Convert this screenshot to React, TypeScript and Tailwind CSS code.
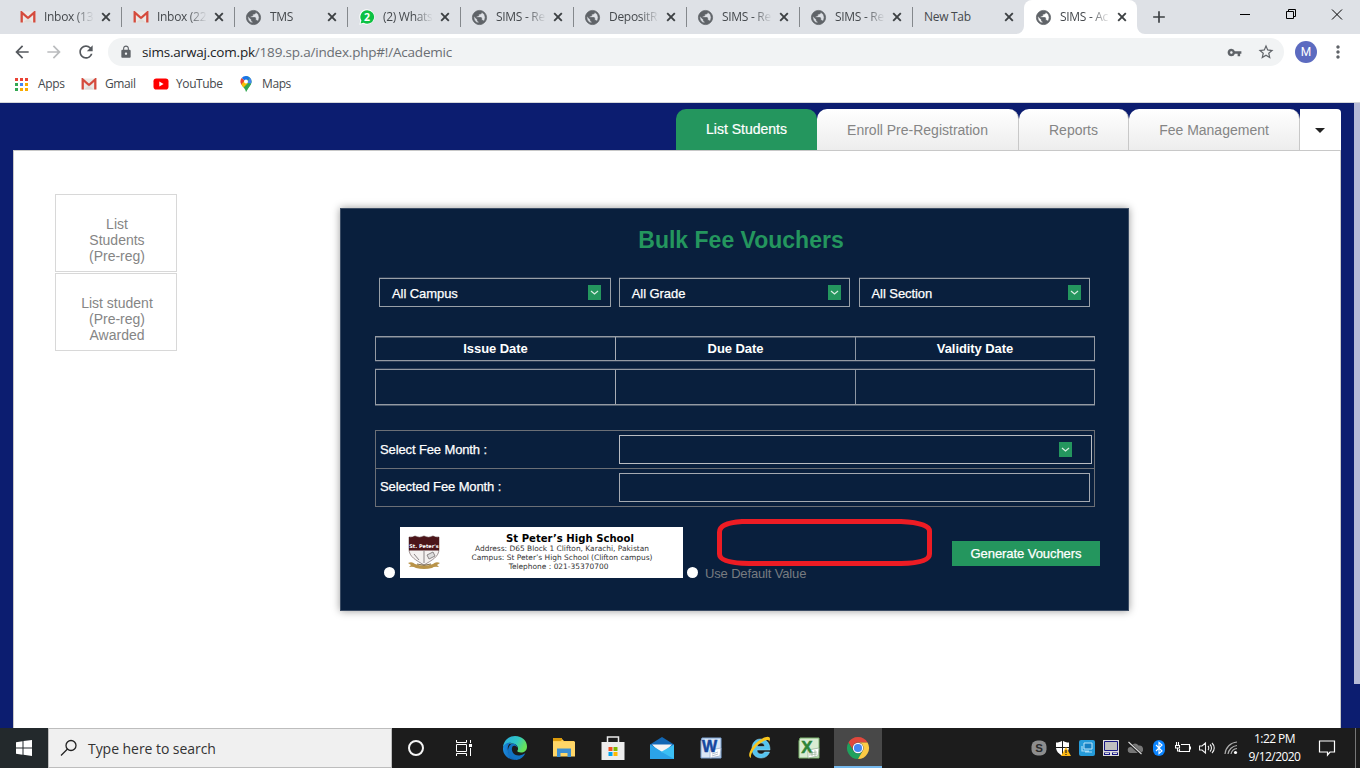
import React from "react";
import {
  MdArrowBack,
  MdArrowForward,
  MdRefresh,
  MdLock,
  MdVpnKey,
  MdStarBorder,
  MdMoreVert,
  MdAdd,
} from "react-icons/md";

const ui = "font-['Open_Sans','Noto_Sans',sans-serif]";

function Gmail({ className = "" }: { className?: string }) {
  return (
    <svg viewBox="0 0 16 12" className={`h-[12px] w-[16px] ${className}`}>
      <rect x="1" y="0.5" width="14" height="11" fill="#ebe9e7" />
      <path d="M1.700 11.500V1.500L8 7L14.300 1.500V11.500" fill="none" stroke="#d54b3d" strokeWidth="2.300" />
      <path d="M3 11.500L8 7.500L13 11.500z" fill="#dedcd9" />
    </svg>
  );
}

function Globe() {
  return (
    <svg viewBox="0 0 24 24" className="-ml-px size-[17px] shrink-0 text-[#5f6368]">
      <path
        d="M12 2C6.480 2 2 6.480 2 12s4.480 10 10 10 10-4.480 10-10S17.520 2 12 2zm-1 17.930c-3.950-.490-7-3.850-7-7.930 0-.620.080-1.210.210-1.790L9 15v1c0 1.100.900 2 2 2v1.930zm6.900-2.540c-.260-.810-1-1.390-1.900-1.390h-1v-3c0-.550-.450-1-1-1H8v-2h2c.550 0 1-.450 1-1V7h2c1.100 0 2-.900 2-2v-.410c2.930 1.190 5 4.060 5 7.410 0 2.080-.800 3.970-2.100 5.390z"
        fill="currentColor"
        stroke="currentColor"
        strokeWidth="1"
      />
    </svg>
  );
}

function Whats() {
  return (
    <svg viewBox="0 0 16 16" className="size-[16px]">
      <path d="M8 .2a7.700 7.700 0 1 1-3.500 14.600L.3 15.800l1-4A7.800 7.800 0 0 1 8 .2z" fill="#fff" />
      <path d="M8 1.200a6.800 6.800 0 1 1-3.400 12.500l-3 .8.800-2.900A6.800 6.800 0 0 1 8 1.200z" fill="#0dc143" />
      <text x="8" y="12" textAnchor="middle" fontSize="10.500" fontWeight="700" fontFamily="Open Sans, sans-serif" fill="#fff">2</text>
    </svg>
  );
}

type Tab = { icon: "gmail" | "globe" | "whats" | "none"; title: string; active?: boolean };
const tabs: Tab[] = [
  { icon: "gmail", title: "Inbox (13" },
  { icon: "gmail", title: "Inbox (22" },
  { icon: "globe", title: "TMS" },
  { icon: "whats", title: "(2) Whats" },
  { icon: "globe", title: "SIMS - Re" },
  { icon: "globe", title: "DepositR" },
  { icon: "globe", title: "SIMS - Re" },
  { icon: "globe", title: "SIMS - Re" },
  { icon: "none", title: "New Tab" },
  { icon: "globe", title: "SIMS - Ac", active: true },
];

function TabStrip() {
  return (
    <div className="flex h-[34px] bg-[#dee1e6] pl-2">
      {tabs.map((t, i) => (
        <div
          key={i}
          className={`relative flex h-[34px] w-[113px] shrink-0 items-center pl-3 ${t.active ? "-ml-px rounded-t-lg bg-white" : ""}`}
        >
          {t.icon !== "none" && (
            <span className="mr-2 flex w-4 shrink-0">
              {t.icon === "gmail" && <Gmail />}
              {t.icon === "globe" && <Globe />}
              {t.icon === "whats" && <Whats />}
            </span>
          )}
          <span
            className={`${t.icon === "none" ? "w-[73px]" : "w-[50px]"} shrink-0 overflow-hidden text-[12px] leading-4 tracking-[-0.3px] whitespace-nowrap text-[#45494d] ${t.icon === "none" ? "" : "[mask-image:linear-gradient(to_right,#000_62%,transparent)]"}`}
          >
            {t.title}
          </span>
          <svg viewBox="0 0 14 14" className="ml-[5px] size-[14px] shrink-0">
            <path d="M3.200 3.200l7.600 7.600M10.800 3.200l-7.600 7.600" stroke="#3c4043" strokeWidth="1.900" />
          </svg>
          {i < 8 && <span className="-mr-px ml-auto h-5 w-px bg-[#84888c]" />}
          {t.active && (
            <>
              <svg viewBox="0 0 8 8" className="absolute bottom-0 -left-2 size-2"><path d="M8 0v8H0a8 8 0 0 0 8-8" fill="#fff" /></svg>
              <svg viewBox="0 0 8 8" className="absolute -right-2 bottom-0 size-2"><path d="M0 0v8h8a8 8 0 0 1-8-8" fill="#fff" /></svg>
            </>
          )}
        </div>
      ))}
      <MdAdd className="mt-[7px] ml-[12px] size-[20px] shrink-0 text-[#3c4043]" />
      <svg viewBox="0 0 110 16" className="mt-[6px] ml-[67px] h-[16px] w-[110px] shrink-0" fill="none" stroke="#000">
        <path d="M4 8.500h10M50.500 5.500h7v7h-7zM52.500 5.500v-2h7v7h-2M96 3.500l10 10M106 3.500l-10 10" />
      </svg>
    </div>
  );
}

function AddressBar() {
  return (
    <div className="flex h-[37px] items-center pb-px pl-[12px]">
      <MdArrowBack className="size-[20px] text-[#55595e]" />
      <MdArrowForward className="ml-[12px] size-[20px] text-[#babcbe]" />
      <MdRefresh className="ml-[12px] size-[20px] text-[#55595e]" />
      <div className="ml-[12px] flex h-[28px] w-[1176px] items-center rounded-full bg-[#f1f3f4] pl-[11px]">
        <MdLock className="size-[14px] text-[#5f6368]" />
        <span className="ml-[9px] text-[13.5px] tracking-[-0.2px] whitespace-nowrap text-[#6a6e73]">
          <span className="text-[#202124]">sims.arwaj.com.pk</span>/189.sp.a/index.php#!/Academic
        </span>
        <MdVpnKey className="ml-auto size-[15px] text-[#5f6368]" />
        <MdStarBorder className="mr-[9px] ml-[15px] size-[18px] text-[#5f6368]" />
      </div>
      <div className="ml-[11px] flex size-[22px] items-center justify-center rounded-full bg-[#5c6bc0] font-[Roboto] text-[12px] text-white">M</div>
      <MdMoreVert className="ml-[11px] size-[20px] text-[#5f6368]" />
    </div>
  );
}

const appDots = ["#ea4335", "#ea4335", "#ea4335", "#34a853", "#4285f4", "#f9ab00", "#34a853", "#f9ab00", "#f9ab00"];

function Bookmarks() {
  return (
    <div className="flex h-[32px] items-center border-b border-[#d5d7da] pb-[5px] pl-[15px] text-[12px] text-[#45494d]">
      <svg viewBox="0 0 13 13" className="size-[13px]">
        {appDots.map((c, i) => (
          <rect key={i} x={(i % 3) * 5} y={Math.floor(i / 3) * 5} width="3" height="3" fill={c} />
        ))}
      </svg>
      <span className="ml-[10px] w-[43px] tracking-[-0.3px]">Apps</span>
      <Gmail />
      <span className="ml-[8px] w-[48px] tracking-[-0.4px]">Gmail</span>
      <svg viewBox="0 0 16 12" className="h-[12px] w-[16px]">
        <rect x="0.500" y="0.500" width="15" height="11" rx="2.800" fill="#f00" />
        <path d="M6.300 3.500v5l4.300-2.500z" fill="#fff" />
      </svg>
      <span className="ml-[7px] w-[64px] tracking-[-0.4px]">YouTube</span>
      <svg viewBox="0 0 12 16" className="h-[16px] w-[12px]">
        <path d="M6 0a5.600 5.600 0 0 1 5.600 5.600C11.600 10 7.200 11.500 6 16z" fill="#34a853" />
        <path d="M6 16C5.500 12.500 2.800 11 1.300 8.500L9.500 2 11 8z" fill="#34a853" />
        <path d="M1.300 8.500C-.2 6 .3 3.500 1.700 2L6 5.600z" fill="#ea4335" />
        <path d="M1.300 8.500 6 3l2 4-4.500 4.600z" fill="#fbbc04" />
        <path d="M1.700 2A5.600 5.600 0 0 1 9.800 1.600L6 5.600z" fill="#1a73e8" />
        <path d="M9.800 1.600a5.600 5.600 0 0 1 1.300 6L7 7z" fill="#4285f4" />
        <circle cx="6" cy="5.600" r="2" fill="#fff" />
      </svg>
      <span className="ml-[10px] tracking-[-0.4px]">Maps</span>
    </div>
  );
}

const navItem = "flex h-[41px] items-center justify-center rounded-t-[10px] border-r border-[#c8c8c8] bg-linear-to-b from-white to-[#ededed] pt-[2px] text-[14px] text-[#858585]";

function Caret() {
  return (
    <span className="flex h-[15px] w-[13px] items-center justify-center bg-[#24965e]">
      <svg viewBox="0 0 9 6" className="h-[6px] w-[9px]"><path d="M1 1l3.500 3L8 1" fill="none" stroke="#d9eee2" strokeWidth="1.200" /></svg>
    </span>
  );
}

function Select({ label }: { label: string }) {
  return (
    <div className="flex h-[29px] w-[231.5px] items-center border border-[#99a0a8] pr-[8.5px] pl-[12px] text-[13px] tracking-[-0.07px] text-white shadow-[0_-1px_#2c3c55] [-webkit-text-stroke:0.25px_#fff]">
      <span className="mt-[2px] mr-auto">{label}</span>
      <Caret />
    </div>
  );
}

function SchoolCard() {
  return (
    <div className="flex h-[51px] w-[283px] items-start bg-white">
      <svg viewBox="0 0 34 34" className="mt-[8px] ml-[7px] size-[34px] shrink-0">
        <path d="M2 2q4 .5 6-1 4.500 2.500 9 0 4.500 2.500 9 0 2 1.500 6 1v12c0 8-7 11-15 16C9 25 2 22 2 14z" fill="#f4f1f0" stroke="#8a7b7b" strokeWidth=".8" />
        <path d="M2 2q4 .5 6-1 4.500 2.500 9 0 4.500 2.500 9 0 2 1.500 6 1v13.500H2z" fill="#4b1519" />
        <path d="M17 15.500V28M20 20l6-3 2 4-6 3zM7 19l5 6" stroke="#8a8587" strokeWidth="1" fill="#ddd" />
        <path d="M1 28q4-2 7 1 9 3 18 0 3-3 7-1l-3 2 2 2q-5-1-7 1-8 2-16 0-3-2-7-1l2-2z" fill="#b99348" />
        <path d="M10 29q7 2.500 14 0" fill="none" stroke="#5f4720" strokeWidth=".8" />
        <text x="17" y="12.500" textAnchor="middle" fontSize="5" fontWeight="700" fontFamily="DejaVu Sans, sans-serif" fill="#fff">St. Peter's</text>
      </svg>
      <div className="flex flex-1 flex-col items-center pt-[6px] font-['DejaVu_Sans',sans-serif] text-[7.45px] leading-[9px] whitespace-nowrap text-[#333]">
        <div className="pl-[16px] text-[10.1px] leading-[11px] font-bold text-black">St Peter’s High School</div>
        <div>Address: D65 Block 1 Clifton, Karachi, Pakistan</div>
        <div>Campus: St Peter’s High School (Clifton campus)</div>
        <div className="pr-[7px]">Telephone : 021-35370700</div>
      </div>
    </div>
  );
}

function Voucher() {
  return (
    <section className="relative mt-[57px] ml-[163px] h-[403px] w-[789px] border border-[#3b4c64] bg-[#091f3d] pl-[34px] shadow-[0_0_8px_rgba(0,0,0,0.4)]">
      <h1 className="mr-[21px] pt-[17px] text-center text-[23px] leading-[28px] font-bold text-[#24965e]">Bulk Fee Vouchers</h1>
      <div className="mt-[24px] flex gap-[8.25px] pl-[4px]">
        <Select label="All Campus" />
        <Select label="All Grade" />
        <Select label="All Section" />
      </div>
      <div className="mt-[29px] grid h-[25px] w-[720px] grid-cols-[240px_240px_1fr] border border-[#949aa3] text-center text-[13px] leading-[23px] font-bold tracking-[-0.07px] text-white shadow-[inset_0_1px_#4a596d,0_1px_#2c3c55]">
        <div className="border-r border-[#a8adb5]">Issue Date</div>
        <div className="border-r border-[#8d96a3]">Due Date</div>
        <div>Validity Date</div>
      </div>
      <div className="mt-[8px] grid h-[36px] w-[720px] grid-cols-[240px_240px_1fr] border border-[#949aa3] shadow-[0_-1px_#2c3c55,0_1px_#4a596d]">
        <div className="border-r border-[#a8adb5]" />
        <div className="border-r border-[#8d96a3]" />
        <div />
      </div>
      <div className="mt-[25px] w-[720px] border border-[#6b6f76] text-[13px] tracking-[-0.12px] text-white [-webkit-text-stroke:0.25px_#fff]">
        <div className="flex h-[38px] items-center border-b border-[#6b6f76]">
          <span className="w-[243px] pl-[4px]">Select Fee Month :</span>
          <div className="flex h-[29px] w-[473px] items-center justify-end border border-[#b9bcc2] pr-[19px]"><Caret /></div>
        </div>
        <div className="flex h-[37px] items-center">
          <span className="w-[243px] pb-[2px] pl-[4px]">Selected Fee Month :</span>
          <div className="h-[29px] w-[471px] border border-[#a4a9b1]" />
        </div>
      </div>
      <div className="mt-[20px] flex text-[13px] text-[#777b80]">
        <span className="mt-[40px] ml-[9px] size-[11px] shrink-0 rounded-full bg-white" />
        <div className="ml-[5px] shrink-0"><SchoolCard /></div>
        <span className="mt-[40px] ml-[4px] size-[11px] shrink-0 rounded-full bg-white" />
        <span className="mt-[38px] ml-[7px] w-[102px] shrink-0 leading-[18px] tracking-[-0.15px] whitespace-nowrap">Use Default Value</span>
        <button className="mt-[14px] ml-[145px] h-[25px] w-[148px] shrink-0 bg-[#24965e] text-[13px] tracking-[-0.07px] text-white [-webkit-text-stroke:0.25px_#fff]">Generate Vouchers</button>
      </div>
      <svg viewBox="0 0 215 48" className="absolute top-[310px] left-[376px] h-[48px] w-[215px]">
        <path d="M25 2.500H184Q212.500 4 212.500 12V35Q212.500 44 184 44.500H32Q2.500 44 2.500 35V13Q2.500 4 25 2.500z" fill="none" stroke="#ed1c24" strokeWidth="5" />
      </svg>
    </section>
  );
}

function SideBox({ lines }: { lines: string[] }) {
  return (
    <div className="flex h-[78px] w-[122px] flex-col items-center border border-[#d8d8d8] pt-[21px] pl-[2px] text-[14px] leading-4 text-[#858585]">
      {lines.map((l) => <span key={l}>{l}</span>)}
    </div>
  );
}

function Page() {
  return (
    <div className="flex h-[625px] bg-[#0c1d70] font-['Liberation_Sans',Arial,sans-serif]">
      <div className="ml-[13px] w-[1328px]">
        <nav className="mt-[6px] flex h-[41px] justify-end">
          <div className="flex h-[41px] w-[141px] items-center justify-center rounded-t-[10px] bg-[#24965e] text-[14px] text-white [-webkit-text-stroke:0.2px_#fff]">List Students</div>
          <div className={`${navItem} w-[202px]`}>Enroll Pre-Registration</div>
          <div className={`${navItem} w-[110px]`}>Reports</div>
          <div className={`${navItem} w-[171px]`}>Fee Management</div>
          <div className="flex h-[41px] w-[41px] items-center justify-center rounded-tr-sm bg-white pt-[2px] pr-[2px]">
            <svg viewBox="0 0 10 5" className="h-[5px] w-[10px]"><path d="M0 0h10L5 5z" fill="#222" /></svg>
          </div>
        </nav>
        <main className="flex h-[578px] items-start border-x border-t border-[#c8c8c8] bg-white pl-[41px]">
          <aside className="mt-[43px] flex flex-col gap-px">
            <SideBox lines={["List", "Students", "(Pre-reg)"]} />
            <SideBox lines={["List student", "(Pre-reg)", "Awarded"]} />
          </aside>
          <Voucher />
        </main>
      </div>
      <div className="ml-auto h-[581px] w-[6px] bg-[#b5bad7]" />
    </div>
  );
}

const apps: React.ReactNode[] = [
  <svg viewBox="0 0 24 24" className="size-6">
    <defs>
      <linearGradient id="edgeTop" x1="0" x2="1" y1="0" y2=".4"><stop offset="0" stopColor="#2aa9e0" /><stop offset=".6" stopColor="#30c7c5" /><stop offset="1" stopColor="#66e35a" /></linearGradient>
      <linearGradient id="edgeLow" x1="0" x2="1"><stop stopColor="#1b8de0" /><stop offset="1" stopColor="#0d4f9e" /></linearGradient>
    </defs>
    <path d="M0 11.500C.5 4.500 6 0 12 0c7.500 0 12 5.200 12 10.500 0 4-2.700 6-6 6-3 0-4.200-1-3.500-2C16 12.500 14.500 7.500 9 7.500c-5 0-8 2-9 4z" fill="url(#edgeTop)" />
    <path d="M0 12C.5 8.500 4 6 8.500 6.500c-4 2-4.500 6-3 10 1.500 4 5 6.500 8.500 7.300C5.500 25-.5 18.500 0 12z" fill="url(#edgeLow)" />
    <path d="M9.500 10.500c-2 4 1 9.500 7 9 2.500-.2 4.500-1.500 5.800-2.200-1.500 3.500-4.800 6.200-8.500 6.600C8 23 5 19.500 5 15c0-4 2-7 5-7.500 2 0 4 2 4.500 4-1.500-2-4-2.500-5-1z" fill="#1273c4" />
  </svg>,
  <svg viewBox="0 0 22 20" className="h-5 w-[22px]">
    <path d="M0 1h9l2 2h10.500v15H0z" fill="#ffd058" /><path d="M0 0h9v2L7.500 3H0z" fill="#dc9b0c" /><path d="M0 4h22v14.500H0z" fill="#ffd667" /><path d="M4 19V10.500h14V19h-3.500v-4h-7v4z" fill="#3d8fd1" />
  </svg>,
  <svg viewBox="0 0 24 26" className="h-[26px] w-6">
    <path d="M6.500 8V2h11v6" fill="none" stroke="#e9e9e9" strokeWidth="1.500" /><path d="M.5 7h23v18H.5z" fill="#ededed" />
    <path d="M7.500 12h4v4h-4z" fill="#f25022" /><path d="M12.500 12h4v4h-4z" fill="#7fba00" /><path d="M7.500 17h4v4h-4z" fill="#00a4ef" /><path d="M12.500 17h4v4h-4z" fill="#ffb900" />
  </svg>,
  <svg viewBox="0 0 24 24" className="size-6">
    <path d="M0 8.500L12 1l12 7.500V12H0z" fill="#1267b4" /><path d="M2 8.500h20L13.500 17h-3z" fill="#f5f5f5" /><path d="M0 8.500V23h24z" fill="#2ca8e8" /><path d="M24 8.500V23H0l11-7z" fill="#3cc0f4" /><path d="M0 8.500L11 16l2.500 1L24 23H0z" fill="#2ba3e8" />
  </svg>,
  <svg viewBox="0 0 22 22" className="size-[22px]">
    <path d="M2 1h19v20H1V4z" fill="#d9e6f6" stroke="#7da3d4" /><path d="M10 13l11-2-1 8-10 2z" fill="#fff" stroke="#93a9c6" strokeWidth=".7" />
    <text x="9.500" y="15" textAnchor="middle" fontFamily="Liberation Sans" fontWeight="700" fontSize="16" fill="#15479e" stroke="#15479e" strokeWidth=".5">W</text><path d="M12 17l6-2M12 19l6-2" stroke="#9aaabd" strokeWidth=".7" />
  </svg>,
  <svg viewBox="0 0 24 24" className="size-6">
    <path d="M12.500 3C7 3 4 7.500 4 12.500 4 18 7.500 22 13 22c4.500 0 7.500-2.500 8.500-6h-5c-.7 1.500-2 2-3.500 2-2.500 0-4-1.500-4-4h13C22 7 18.500 3 12.500 3zM9 10.500C9.500 8 11 7 13 7s3.500 1.200 3.700 3.500z" fill="#55c4f0" stroke="#97e0fc" strokeWidth=".5" fillRule="evenodd" />
    <path d="M3 22C-2 20 4 9 12 4c5-3.500 10-4.500 10-1 0 1-.4 2-1 3 .3-2.500-2-2.500-6-.5C8 9 2 17.500 3 22z" fill="#f8c51c" />
  </svg>,
  <svg viewBox="0 0 22 22" className="size-[22px]">
    <path d="M2 1h19v20H1V4z" fill="#d8ecd2" stroke="#7ab26c" /><path d="M10 13l11-2-1 8-10 2z" fill="#fff" stroke="#8cab8c" strokeWidth=".7" />
    <text x="9" y="15.500" textAnchor="middle" fontFamily="Liberation Sans" fontWeight="700" fontSize="17" fill="#2e8438" stroke="#2e8438" strokeWidth=".5">X</text><path d="M11 16l8-1M11 18l8-1M14 14v5M17 13v6" stroke="#8ba88b" strokeWidth=".6" />
  </svg>,
  <svg viewBox="0 0 24 24" className="size-6">
    <path d="M2.470 6.500A11 11 0 0 1 21.530 6.500H12A5.500 5.500 0 0 0 7.200 14.700z" fill="#e0483d" />
    <path d="M2.470 6.500A11 11 0 0 0 12 23l4.760-8.250A5.500 5.500 0 0 1 7.240 14.750z" fill="#1fa15d" />
    <path d="M21.530 6.500A11 11 0 0 1 12 23l4.760-8.250A5.500 5.500 0 0 0 12 6.500z" fill="#fccb45" />
    <circle cx="12" cy="12" r="5.200" fill="#fff" /><circle cx="12" cy="12" r="4.100" fill="#4687f4" />
  </svg>,
];

const tray: React.ReactNode[] = [
  <><rect x="0.500" y="0.500" width="15" height="15" rx="6" fill="#8d8d8d" /><text x="8" y="12" textAnchor="middle" fontFamily="Liberation Sans" fontSize="11.500" fontWeight="700" fill="#2a2a2a">S</text></>,
  <><path d="M7.500.5C5.500 2 3.500 2.500 1 2.500V7c0 4.500 3 7 6.500 8.500C11 14 14 11.500 14 7V2.500C11.500 2.500 9.500 2 7.500.5z" fill="#fff" /><path d="M7.500 0v16M0 7.500h15" stroke="#1c1c1c" /><path d="M11 7l5 9H6z" fill="#fdb913" /><path d="M11 10v3M11 14v1" stroke="#222" strokeWidth="1.200" /></>,
  <><rect width="16" height="16" rx="2" fill="#259bd9" /><path d="M5 3h8v6H5z" fill="#1680c2" stroke="#bfe6fa" /><path d="M3 6v5h7M6 12h7" fill="none" stroke="#a7dcf7" strokeWidth="1.200" /></>,
  <><path d="M0 0h16v16H0z" fill="#ddd" /><path d="M1.500 1.500h13v9h-13z" fill="#c0c0c0" stroke="#171783" /><path d="M1 12.500h6v2.500H1zM9 12.500h6v2.500H9z" fill="#171783" /><path d="M2 13h4v1H2zM10 13h4v1h-4z" fill="#ddd" /></>,
  <><path d="M4 13a3 3 0 0 1-.5-6A4.500 4.500 0 0 1 11.500 5.500 3.800 3.800 0 0 1 13 13z" fill="#777" /><path d="M1.500 2.500l13 12" stroke="#1c1c1c" strokeWidth="3" /><path d="M1.500 2l13 12" stroke="#ddd" strokeWidth="1.100" /></>,
  <><rect x="2" y="0" width="12" height="16" rx="6" fill="#0a84ff" /><path d="M5 5l6 6-3 2.500v-11L11 5l-6 6" fill="none" stroke="#fff" strokeWidth="1.100" /></>,
  <><path d="M6 4.500h8.500v7H4.500V9M15.500 6.500v3M0 5.500h5M.5 5.500v2.500h4V5.500M1.500 5V2M3.500 5V2M2.500 8v3H5" fill="none" stroke="#fff" strokeWidth="1.100" /></>,
  <><path d="M.5 6v4h2.500l3.500 3V3L3 6zM9 6c1 1 1 3 0 4M11 4.500c2 2 2 5 0 7M13 3c3 3 3 7 0 10" fill="none" stroke="#eee" strokeWidth="1.100" /></>,
  <><path d="M2 14A13 13 0 0 1 14 2M5 14A10 10 0 0 1 14 5.500M8 14A7 7 0 0 1 14 8.500" fill="none" stroke="#b0b0b0" strokeWidth="1.200" /><circle cx="12.500" cy="12.500" r="1.600" fill="#fff" /></>,
];

function Taskbar() {
  return (
    <footer className="flex h-[40px] bg-[#1c1c1c]">
      <div className="flex w-[48px] items-center justify-center bg-[#23292c]">
        <svg viewBox="0 0 16 16" className="size-4" fill="#fff"><path d="M0 2.200l6.500-.9v6.200H0zM7.500 1.100L16 0v7.500H7.500zM0 8.500h6.500v6.200L0 13.800zM7.500 8.500H16V16l-8.500-1.200z" /></svg>
      </div>
      <div className="flex w-[344px] items-center border border-[#bdbdbd] bg-[#f0f0f0] pl-[11px]">
        <svg viewBox="0 0 18 18" className="size-[18px]" fill="none" stroke="#222" strokeWidth="1.300"><circle cx="11" cy="6.500" r="5" /><path d="M7.500 10L1 16.500" /></svg>
        <span className="ml-[10px] text-[14px] tracking-[-0.05px] text-[#333]">Type here to search</span>
      </div>
      <div className="flex w-[48px] items-center justify-center">
        <svg viewBox="0 0 18 18" className="size-[18px]"><circle cx="9" cy="9" r="7" fill="none" stroke="#f5f5f5" strokeWidth="2" /></svg>
      </div>
      <div className="flex w-[48px] items-center justify-center">
        <svg viewBox="0 0 16 16" className="size-4" fill="none" stroke="#fff"><path d="M.5 0v2.500h10V0M.5 16v-2.500h10V16M.5 4.500h10v7H.5zM14.500 0v3M14.500 8v8" /><path d="M13 4h3v3h-3z" fill="#fff" stroke="none" /></svg>
      </div>
      <div className="ml-[3px] flex">
        {apps.map((a, i) => (
          <div key={i} className={`flex items-center justify-center ${i === 7 ? "w-[48px] bg-[#484848] shadow-[inset_0_-2px_#76b9ed]" : "w-[49px] pr-px"}`}>{a}</div>
        ))}
      </div>
      <div className="ml-auto flex items-center">
        <div className="flex items-center gap-2">
          {tray.map((t, i) => <svg key={i} viewBox="0 0 16 16" className="size-4">{t}</svg>)}
        </div>
        <div className="w-[71px] text-center text-[12px] leading-[18px] tracking-[-0.55px] whitespace-nowrap text-white">
          <div>1:22 PM</div>
          <div>9/12/2020</div>
        </div>
        <svg viewBox="0 0 18 18" className="ml-[8px] size-[18px]" fill="none" stroke="#fff" strokeWidth="1.200"><path d="M1.500 2h15v11h-4.500l-2.500 3v-3h-8z" /></svg>
        <div className="ml-[19px] h-[40px] w-[5px] border-l border-[#777]" />
      </div>
    </footer>
  );
}

export default function App() {
  return (
    <div className={`h-[768px] w-[1360px] overflow-hidden bg-white ${ui}`}>
      <TabStrip />
      <AddressBar />
      <Bookmarks />
      <Page />
      <Taskbar />
    </div>
  );
}
